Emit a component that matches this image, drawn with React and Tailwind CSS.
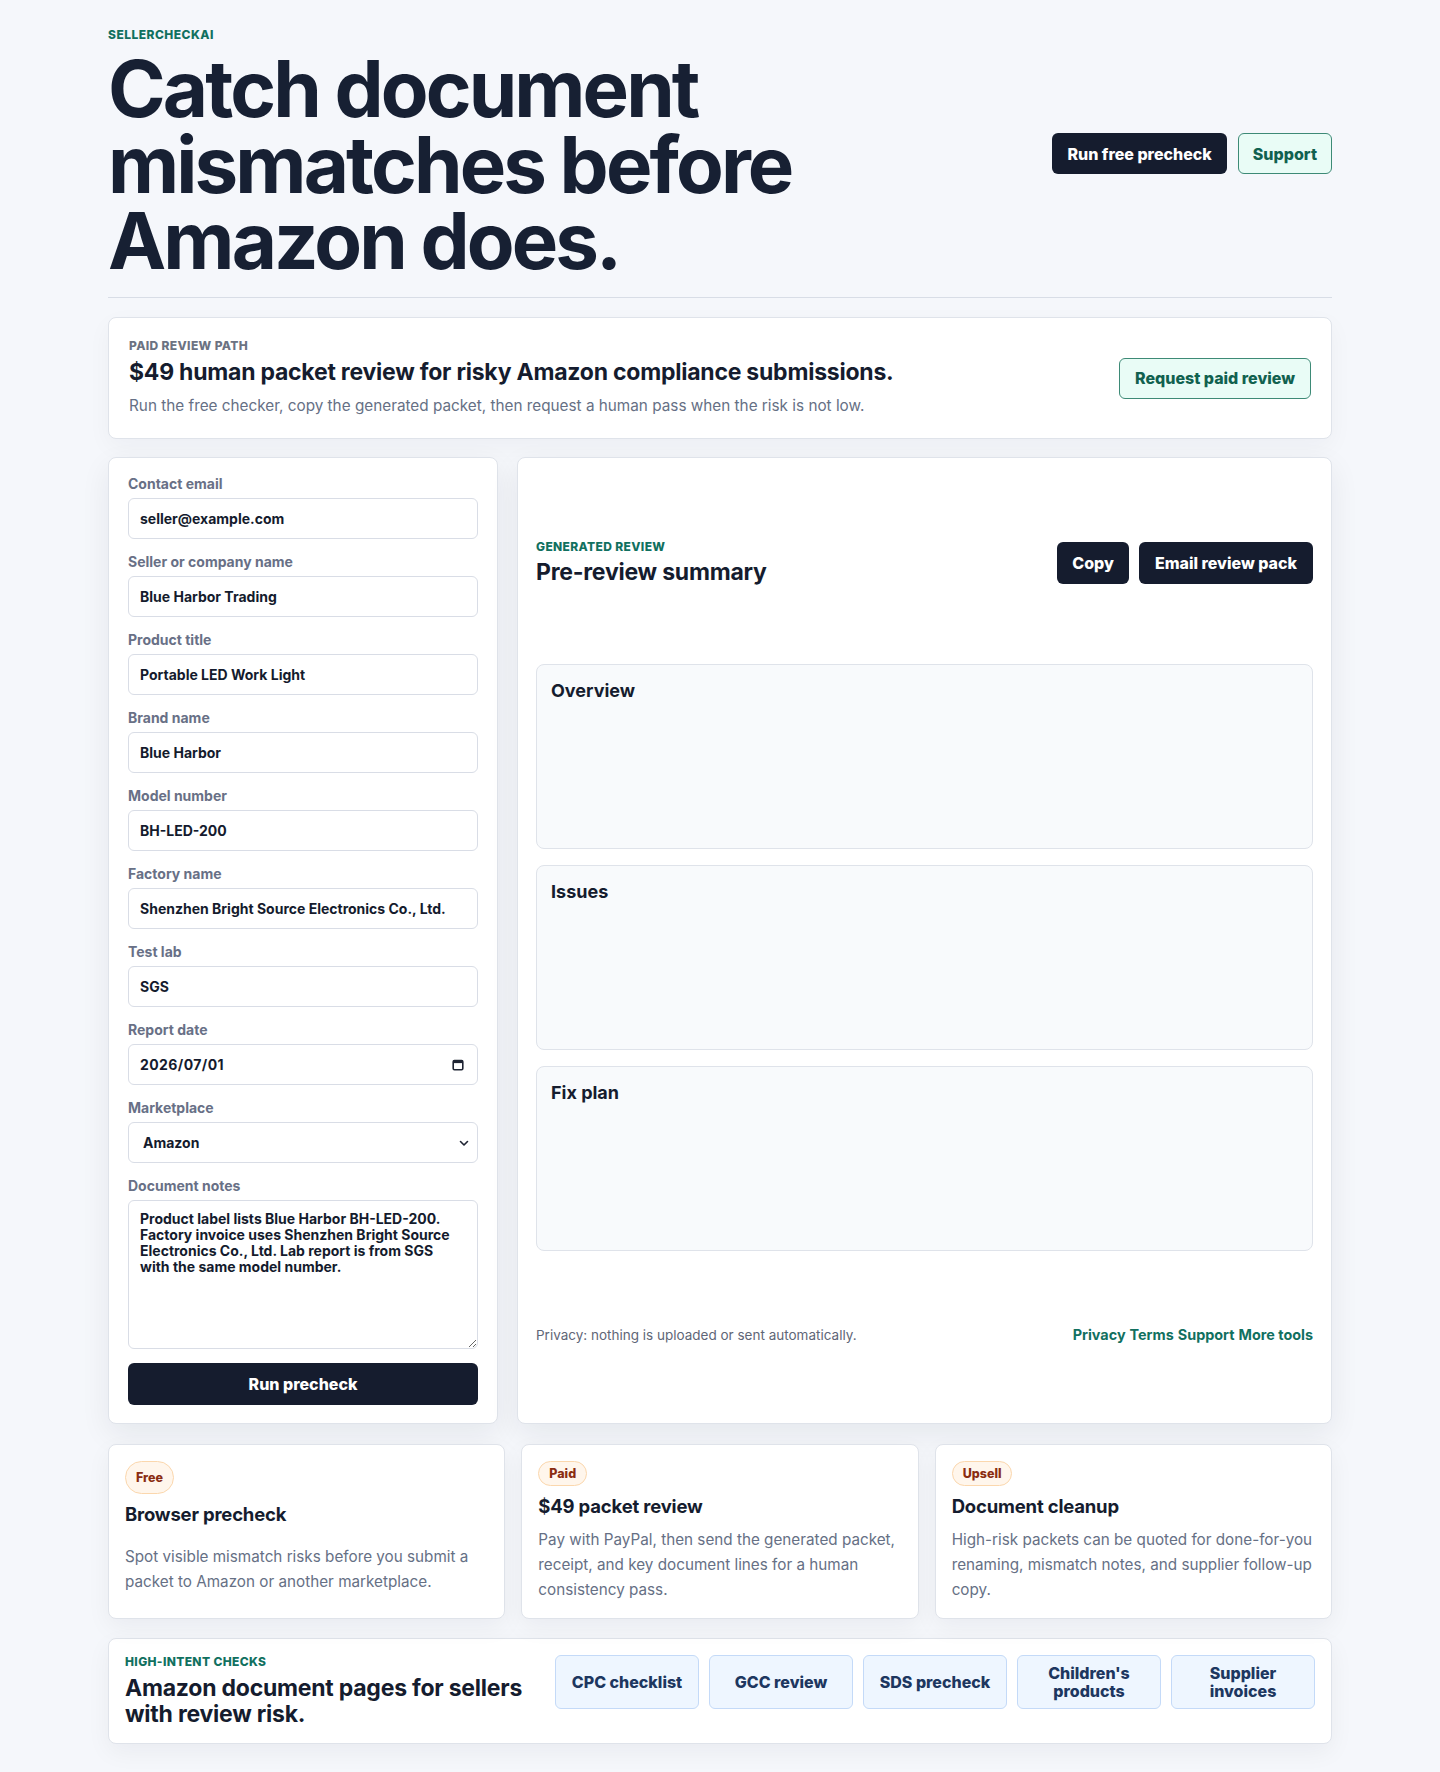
import { useState } from "react";

const fields = [
  { label: "Contact email", value: "seller@example.com" },
  { label: "Seller or company name", value: "Blue Harbor Trading" },
  { label: "Product title", value: "Portable LED Work Light" },
  { label: "Brand name", value: "Blue Harbor" },
  { label: "Model number", value: "BH-LED-200" },
  { label: "Factory name", value: "Shenzhen Bright Source Electronics Co., Ltd." },
  { label: "Test lab", value: "SGS" },
];

const offers = [
  {
    tag: "Free",
    title: "Browser precheck",
    body: "Spot visible mismatch risks before you submit a packet to Amazon or another marketplace.",
  },
  {
    tag: "Paid",
    title: "$49 packet review",
    body: "Pay with PayPal, then send the generated packet, receipt, and key document lines for a human consistency pass.",
  },
  {
    tag: "Upsell",
    title: "Document cleanup",
    body: "High-risk packets can be quoted for done-for-you renaming, mismatch notes, and supplier follow-up copy.",
  },
];

const checks = ["CPC checklist", "GCC review", "SDS precheck", "Children's products", "Supplier invoices"];

const inputClass =
  "h-[41px] w-full rounded-md border border-[#d9dde6] bg-white px-[11px] text-[14px] font-bold text-[#141b2d] outline-none";

function Field({ label, children }) {
  return (
    <label className="flex flex-col gap-[6px]">
      <span className="text-[14px] leading-[17px] font-bold text-[#687086]">{label}</span>
      {children}
    </label>
  );
}

export default function App() {
  const [notes, setNotes] = useState(
    "Product label lists Blue Harbor BH-LED-200. Factory invoice uses Shenzhen Bright Source Electronics Co., Ltd. Lab report is from SGS with the same model number."
  );

  return (
    <div className="min-h-screen bg-[#f5f7fb] font-['Inter',sans-serif] text-[#151c2e]">
      <div className="mx-auto max-w-[1224px] pt-[28px] pb-[29px]">
        {/* Header */}
        <header className="flex items-center justify-between border-b border-[#d8dde6] pb-[18px]">
          <div>
            <div className="text-[12px] leading-[14px] font-extrabold tracking-[0.04em] text-[#11705f]">
              SELLERCHECKAI
            </div>
            <h1 className="mt-[9px] max-w-[720px] text-[78px] leading-[76px] font-bold tracking-[-0.037em] text-[#172033]">
              Catch document mismatches before Amazon does.
            </h1>
          </div>
          <div className="flex gap-[11px]">
            <button className="h-[41px] rounded-md bg-[#151c2e] px-[15px] text-[16px] font-extrabold text-white">
              Run free precheck
            </button>
            <button className="h-[41px] rounded-md border border-[#3d8a76] bg-[#e9fcf6] px-[14px] text-[16px] font-extrabold text-[#11614f]">
              Support
            </button>
          </div>
        </header>

        {/* Paid review banner */}
        <section className="mt-[19px] flex items-center justify-between rounded-lg border border-[#dfe3ea] bg-white px-5 py-[21px] shadow-[0_8px_24px_rgba(15,23,42,0.04)]">
          <div>
            <div className="text-[12px] leading-[14px] font-extrabold tracking-[0.03em] text-[#6b7282]">
              PAID REVIEW PATH
            </div>
            <h2 className="mt-[5px] text-[23px] leading-[28px] font-bold tracking-[-0.01em] text-[#151c2e]">
              $49 human packet review for risky Amazon compliance submissions.
            </h2>
            <p className="mt-[9px] text-[15.3px] leading-[22px] text-[#667085]">
              Run the free checker, copy the generated packet, then request a human pass when the risk is not low.
            </p>
          </div>
          <button className="h-[41px] rounded-md border border-[#3d8a76] bg-[#e9fcf6] px-[15px] text-[16px] font-extrabold text-[#11614f]">
            Request paid review
          </button>
        </section>

        {/* Form + generated review */}
        <div className="mt-[18px] grid grid-cols-[390px_1fr] gap-[19px]">
          <form className="flex flex-col gap-[14px] rounded-lg border border-[#dfe3ea] bg-white px-[19px] pt-[17px] pb-[18px] shadow-[0_10px_30px_rgba(15,23,42,0.07)]">
            {fields.map((f) => (
              <Field key={f.label} label={f.label}>
                <input className={inputClass} defaultValue={f.value} />
              </Field>
            ))}
            <Field label="Report date">
              <div className="relative">
                <input className={inputClass + " tracking-[0.03em]"} defaultValue="2026/07/01" />
                <svg
                  className="absolute top-1/2 right-[14px] -translate-y-1/2"
                  width="12"
                  height="12"
                  viewBox="0 0 12 12"
                  fill="none"
                >
                  <rect x="1.2" y="1.5" width="9.6" height="9.3" rx="1.2" stroke="#1f2433" strokeWidth="1.6" />
                  <rect x="1.2" y="1.5" width="9.6" height="2.6" fill="#1f2433" />
                </svg>
              </div>
            </Field>
            <Field label="Marketplace">
              <div className="relative">
                <select className={inputClass + " appearance-none pl-[14px]"} defaultValue="Amazon">
                  <option>Amazon</option>
                  <option>Walmart</option>
                  <option>eBay</option>
                </select>
                <svg
                  className="pointer-events-none absolute top-1/2 right-[9px] -translate-y-1/2"
                  width="10"
                  height="10"
                  viewBox="0 0 10 10"
                  fill="none"
                >
                  <path d="M1.5 3.5 5 7l3.5-3.5" stroke="#1f2433" strokeWidth="1.6" strokeLinecap="round" strokeLinejoin="round" />
                </svg>
              </div>
            </Field>
            <Field label="Document notes">
              <textarea
                className="h-[149px] w-full rounded-md border border-[#d9dde6] bg-white py-[10px] pr-[18px] pl-[11px] text-[14px] leading-4 font-bold text-[#141b2d] outline-none"
                value={notes}
                onChange={(e) => setNotes(e.target.value)}
              />
            </Field>
            <button
              type="button"
              className="h-[42px] w-full rounded-md bg-[#151c2e] text-[16px] font-extrabold text-white"
            >
              Run precheck
            </button>
          </form>

          <section className="grid grid-rows-[170px_185px_185px_185px_1fr] gap-4 rounded-lg border border-[#dfe3ea] bg-white px-[18px] py-5 shadow-[0_10px_30px_rgba(15,23,42,0.07)]">
            <div className="flex items-center justify-between">
              <div>
                <div className="text-[12px] leading-[14px] font-extrabold tracking-[0.03em] text-[#11705f]">
                  GENERATED REVIEW
                </div>
                <h2 className="mt-[4px] text-[23px] leading-[28px] font-bold tracking-[-0.01em]">Pre-review summary</h2>
              </div>
              <div className="flex gap-[10px]">
                <button className="h-[42px] rounded-md bg-[#151c2e] px-[15px] text-[16px] font-extrabold text-white">
                  Copy
                </button>
                <button className="h-[42px] rounded-md bg-[#151c2e] px-[16px] text-[16px] font-extrabold text-white">
                  Email review pack
                </button>
              </div>
            </div>
            {["Overview", "Issues", "Fix plan"].map((s) => (
              <div key={s} className="rounded-lg border border-[#dfe3ea] bg-[#f8fafc] px-[14px] py-[14px]">
                <h3 className="text-[18px] leading-[24px] font-bold">{s}</h3>
              </div>
            ))}
            <div className="flex items-center justify-between">
              <span className="text-[13.5px] text-[#5f6677]">Privacy: nothing is uploaded or sent automatically.</span>
              <nav className="flex gap-[4px] text-[14.4px] font-bold text-[#11705f]">
                <a href="#privacy">Privacy</a>
                <a href="#terms">Terms</a>
                <a href="#support">Support</a>
                <a href="#tools">More tools</a>
              </nav>
            </div>
          </section>
        </div>

        {/* Offers */}
        <div className="mt-[20px] grid grid-cols-3 gap-4">
          {offers.map((o) => (
            <div
              key={o.tag}
              className="grid gap-2 rounded-lg border border-[#dfe3ea] bg-white p-4 shadow-[0_8px_24px_rgba(15,23,42,0.05)]"
            >
              <span className="flex items-center justify-self-start rounded-full border border-[#fbd7ad] bg-[#fff6ec] px-[10px] text-[12.5px] leading-[23px] font-extrabold text-[#8a2d12]">
                {o.tag}
              </span>
              <h3 className="text-[18.5px] leading-[25px] font-bold tracking-[-0.01em]">{o.title}</h3>
              <p className="text-[15.25px] leading-[25px] text-[#667085]">{o.body}</p>
            </div>
          ))}
        </div>

        {/* High-intent pages */}
        <section className="mt-[19px] flex items-start gap-4 rounded-lg border border-[#dfe3ea] bg-white p-4 shadow-[0_8px_24px_rgba(15,23,42,0.05)]">
          <div className="min-w-0 flex-1">
            <div className="text-[12px] leading-[14px] font-extrabold tracking-[0.03em] text-[#11705f]">
              HIGH-INTENT CHECKS
            </div>
            <h2 className="mt-[6px] text-[23px] leading-[26px] font-bold tracking-[-0.01em]">
              Amazon document pages for sellers with review risk.
            </h2>
          </div>
          <div className="grid w-[760px] grid-cols-5 gap-[10px]">
            {checks.map((c) => (
              <a
                key={c}
                href="#check"
                className="flex min-h-[53px] items-center justify-center rounded-md border border-[#c4daf8] bg-[#eef6ff] px-3 py-2 text-center text-[16px] leading-[18px] font-extrabold text-[#1d3760]"
              >
                {c}
              </a>
            ))}
          </div>
        </section>
      </div>
    </div>
  );
}
